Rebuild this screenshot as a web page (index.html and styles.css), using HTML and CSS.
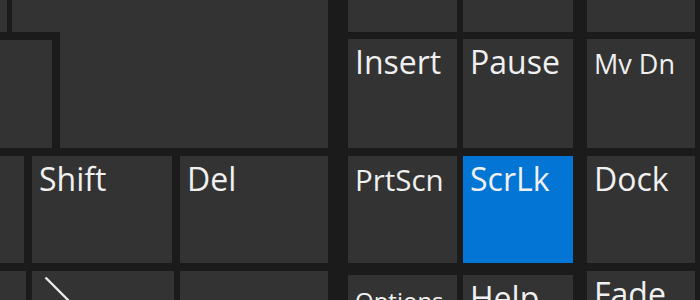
FILE: index.html
```html
<!DOCTYPE html>
<html>
<head>
<meta charset="utf-8">
<link rel="stylesheet" href="styles.css">
</head>
<body>
<div class="osk">
  <div class="left">
    <div class="top-grid">
      <div class="key k-a"></div>
      <div class="key k-b"></div>
      <div class="key enter-top"></div>
      <div class="key enter-side"></div>
    </div>
    <div class="row r3">
      <div class="key w24"></div>
      <div class="key w140"><div class="label">Shift</div></div>
      <div class="key w148"><div class="label">Del</div></div>
    </div>
    <div class="row r4">
      <div class="key w26"></div>
      <div class="key w142">
        <svg class="chev" width="60" height="40" viewBox="0 0 60 40"><path d="M1.5 0.5 L40 39" fill="none" stroke="#ececec" stroke-width="2.3"/></svg>
      </div>
      <div class="key w148"></div>
    </div>
  </div>
  <div class="right">
    <div class="key c1 rw1"></div>
    <div class="key c2 rw1"></div>
    <div class="key c3 rw1"></div>

    <div class="key c1 rw2"><div class="label">Insert</div></div>
    <div class="key c2 rw2"><div class="label">Pause</div></div>
    <div class="key c3 rw2"><div class="label"><span class="sm">Mv Dn</span></div></div>

    <div class="key c1 rw3"><div class="label"><span class="md">PrtScn</span></div></div>
    <div class="key c2 rw3 blue"><div class="label">ScrLk</div></div>
    <div class="key c3 rw3"><div class="label">Dock</div></div>

    <div class="key c1 rw4 drop"><div class="label"><span class="xs">Options</span></div></div>
    <div class="key c2 rw4 drop"><div class="label">Help</div></div>
    <div class="key c3 rw4"><div class="label">Fade</div></div>
  </div>
</div>
</body>
</html>
```
FILE: styles.css
```css
html, body {
  margin: 0;
  padding: 0;
  background: #1b1b1b;
}

.osk {
  display: flex;
  gap: 20px;
  width: 700px;
  height: 300px;
  overflow: hidden;
  font-family: "Open Sans", "Noto Sans", sans-serif;
  color: #f0f0f0;
}

.key {
  background: #333333;
  box-sizing: border-box;
  padding: 7px 0 0 7px;
  overflow: hidden;
}

.blue {
  background: #0375d5;
}

.label {
  font-size: 32px;
  line-height: 1;
  white-space: nowrap;
}

.sm { font-size: 27px; }
.md { font-size: 29.5px; }
.xs { font-size: 24px; }

.left {
  flex: none;
  width: 328px;
  display: flex;
  flex-direction: column;
}

.top-grid {
  display: grid;
  grid-template-columns: 4px 8px 40px 8px 268px;
  grid-template-rows: 32px 8px 108px;
  height: 148px;
  flex: none;
}

.k-a { grid-column: 1; grid-row: 1; }
.k-b { grid-column: 1 / 4; grid-row: 3; }
.enter-top { grid-column: 3 / 6; grid-row: 1; }
.enter-side { grid-column: 5; grid-row: 1 / 4; }

.row {
  display: flex;
  flex: none;
}

.r3 {
  margin-top: 8px;
  height: 107px;
  gap: 8px;
}

.r4 {
  margin-top: 8px;
  height: 40px;
  gap: 6px;
}

.w24 { width: 24px; }
.w26 { width: 26px; }
.w140 { width: 140px; }
.w142 { width: 142px; }
.w148 { width: 148px; }

.chev {
  display: block;
  margin: -1px 0 0 5px;
}

.right {
  flex: none;
  width: 347px;
  display: grid;
  grid-template-columns: 109px 6px 110px 14px 108px;
  grid-template-rows: 32px 7px 109px 8px 107px 8px 40px;
}

.c1 { grid-column: 1; }
.c2 { grid-column: 3; }
.c3 { grid-column: 5; }
.rw1 { grid-row: 1; }
.rw2 { grid-row: 3; }
.rw3 { grid-row: 5; }
.rw4 { grid-row: 7; }

.drop { margin-top: 4px; }
```
